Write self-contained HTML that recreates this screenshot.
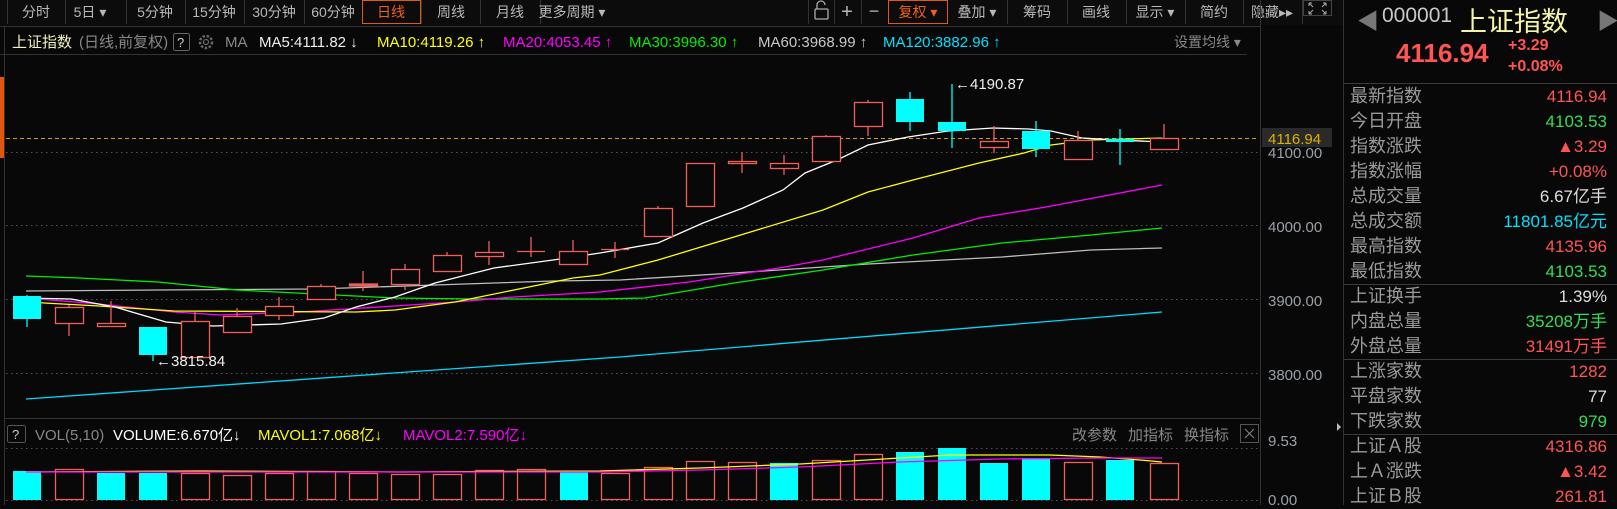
<!DOCTYPE html>
<html><head><meta charset="utf-8">
<style>
*{margin:0;padding:0;box-sizing:border-box}
body{width:1617px;height:505px;background:#080808;overflow:hidden;font-family:"Liberation Sans","Noto Sans CJK SC",sans-serif;position:relative}
svg text{font-family:"Liberation Sans","Noto Sans CJK SC",sans-serif}
#rp{position:absolute;left:1344px;top:0;width:273px;height:505px;background:#080808}
.row{position:absolute;left:6px;width:257px;height:25px;font-size:18px;color:#9a9a9a;line-height:25px}
.row span{position:absolute;right:0;top:0;font-size:17px}
.hl{position:absolute;left:0;width:273px;height:1px;background:#3a3a3a}
</style></head><body>
<svg width="1344" height="505" style="position:absolute;left:0;top:0">
<rect width="1344" height="505" fill="#080808"/>
<!-- toolbar -->
<rect x="0" y="0" width="1344" height="25" fill="#0c0c0c"/>
<line x1="0" y1="26.5" x2="1260" y2="26.5" stroke="#333"/>
<g stroke="#333">
<line x1="7.5" y1="0" x2="7.5" y2="24"/><line x1="65.5" y1="0" x2="65.5" y2="24"/><line x1="126.5" y1="0" x2="126.5" y2="24"/><line x1="185.5" y1="0" x2="185.5" y2="24"/><line x1="244.5" y1="0" x2="244.5" y2="24"/><line x1="304.5" y1="0" x2="304.5" y2="24"/><line x1="421.5" y1="0" x2="421.5" y2="24"/><line x1="480.5" y1="0" x2="480.5" y2="24"/><line x1="540.5" y1="0" x2="540.5" y2="24"/>
<line x1="808.5" y1="0" x2="808.5" y2="24"/><line x1="834.5" y1="0" x2="834.5" y2="24"/><line x1="861.5" y1="0" x2="861.5" y2="24"/><line x1="1007.5" y1="0" x2="1007.5" y2="24"/><line x1="1067.5" y1="0" x2="1067.5" y2="24"/><line x1="1126.5" y1="0" x2="1126.5" y2="24"/><line x1="1185.5" y1="0" x2="1185.5" y2="24"/><line x1="1243.5" y1="0" x2="1243.5" y2="24"/><line x1="1302.5" y1="0" x2="1302.5" y2="24"/>
</g>
<rect x="362.5" y="0.5" width="58" height="23" fill="none" stroke="#e05a10"/>
<rect x="888.5" y="0.5" width="59" height="23" fill="none" stroke="#e05a10"/>
<g font-size="14" fill="#b8b8b8" text-anchor="middle">
<text x="36" y="17">分时</text><text x="90" y="17">5日 ▾</text><text x="155" y="17">5分钟</text><text x="214" y="17">15分钟</text><text x="274" y="17">30分钟</text><text x="333" y="17">60分钟</text>
<text x="391" y="17" fill="#f06018">日线</text><text x="451" y="17">周线</text><text x="510" y="17">月线</text><text x="572" y="17">更多周期 ▾</text>
<text x="847" y="18" font-size="20">+</text><text x="874" y="17" font-size="18">−</text>
<text x="918" y="17" fill="#f06018">复权 ▾</text><text x="977" y="17">叠加 ▾</text><text x="1037" y="17">筹码</text><text x="1096" y="17">画线</text><text x="1155" y="17">显示 ▾</text><text x="1214" y="17">简约</text><text x="1272" y="17">隐藏▸▸</text>
</g>
<g stroke="#aaa" fill="none" stroke-width="1.3"><rect x="815" y="9" width="13" height="10" rx="1"/><path d="M817 9 V5 a4 4 0 0 1 8 0"/></g>
<rect x="1303.5" y="0.5" width="28" height="15" fill="none" stroke="#444"/>
<g stroke="#aaa" stroke-width="1"><path d="M1309 3 l4 4 M1309 3 h3 M1309 3 v3 M1326 3 l-4 4 M1326 3 h-3 M1326 3 v3 M1309 14 l4 -4 M1309 14 h3 M1309 14 v-3 M1326 14 l-4 -4 M1326 14 h-3 M1326 14 v-3"/></g>
<!-- info row -->
<line x1="0" y1="54.5" x2="1247" y2="54.5" stroke="#333"/>
<g font-size="15">
<text x="12" y="47" fill="#f0f0c0">上证指数</text>
<text x="79" y="47" fill="#888">(日线,前复权)</text>
<rect x="173.5" y="33.5" width="16" height="17" rx="2" fill="none" stroke="#666"/><text x="177" y="47" fill="#ccc" font-size="13">?</text>
<circle cx="206" cy="42" r="6" fill="none" stroke="#666" stroke-width="2.5" stroke-dasharray="2.5 1.6"/><circle cx="206" cy="42" r="2.5" fill="none" stroke="#666" stroke-width="1.3"/>
<text x="225" y="47" fill="#888">MA</text>
<text x="259" y="47" fill="#eee">MA5:4111.82 ↓</text>
<text x="377" y="47" fill="#ffff00">MA10:4119.26 ↑</text>
<text x="503" y="47" fill="#ff00ff">MA20:4053.45 ↑</text>
<text x="629" y="47" fill="#00ee00">MA30:3996.30 ↑</text>
<text x="758" y="47" fill="#c8c8c8">MA60:3968.99 ↑</text>
<text x="883" y="47" fill="#00e0ff">MA120:3882.96 ↑</text>
<text x="1174" y="47" fill="#888" font-size="14">设置均线 ▾</text>
</g>
<!-- left edge -->
<line x1="4.5" y1="27" x2="4.5" y2="505" stroke="#333"/>
<rect x="0" y="77" width="4" height="81" fill="#e0560e"/>
<!-- axis -->
<line x1="1260.5" y1="0" x2="1260.5" y2="505" stroke="#333"/>
<g stroke="#555" stroke-dasharray="1.5 3.5">
<line x1="6" y1="152.5" x2="1258" y2="152.5"/><line x1="6" y1="225.5" x2="1258" y2="225.5"/><line x1="6" y1="299.5" x2="1258" y2="299.5"/><line x1="6" y1="373.5" x2="1258" y2="373.5"/>
<line x1="6" y1="448.5" x2="1258" y2="448.5"/><line x1="6" y1="500.5" x2="1258" y2="500.5"/>
</g>
<line x1="6" y1="138.5" x2="1258" y2="138.5" stroke="#d4a000" stroke-dasharray="4 3"/>
<rect x="1262" y="128" width="70" height="19" fill="#2a2a2a"/>
<g font-size="15" fill="#9aa0a8">
<text x="1268" y="144" fill="#e0b000">4116.94</text>
<text x="1268" y="158">4100.00</text><text x="1268" y="232">4000.00</text><text x="1268" y="306">3900.00</text><text x="1268" y="380">3800.00</text>
<text x="1268" y="446">9.53</text><text x="1268" y="505">0.00</text>
</g>
<!-- MA lines -->
<g fill="none" stroke-width="1.3">
<polyline stroke="#00d8ff" points="26,399 620,357 1162,312"/>
<polyline stroke="#bdbdbd" points="26,291 158,290 316,289 435,285 553,281 620,280 734,273 868,264 1002,257 1091,250 1162,248"/>
<polyline stroke="#00ee00" points="26,276 79,278 158,282 237,290 316,294 395,298 474,299 600,299 645,298 734,283 823,270 913,255 1002,243 1091,235 1162,228"/>
<polyline stroke="#ff00ff" points="26,298 99,304 174,312 221,315 300,312 395,306 455,302 514,297 600,292 689,282 779,268 823,260 913,238 979,218 1046,207 1162,185"/>
<polyline stroke="#ffff00" points="26,302 99,306 174,311 356,312 395,310 455,302 514,290 573,278 600,275 658,260 734,237 823,210 868,192 913,180 979,163 1024,153 1051,145 1091,140 1162,138"/>
<polyline stroke="#ffffff" points="26,298 71,299 115,307 166,322 213,326 281,324 324,318 356,307 395,297 435,283 494,268 553,260 600,253 658,243 703,223 743,208 783,190 805,173 837,160 868,145 908,137 948,131 993,128 1029,129 1051,131 1082,138 1118,140 1162,142"/>
</g>
<!-- candles -->
<g stroke="#f0605a" fill="none" stroke-width="1.3">
<line x1="69" y1="305" x2="69" y2="336"/><rect x="55.5" y="307.5" width="28" height="16" fill="#080808"/>
<line x1="111" y1="301" x2="111" y2="326"/><rect x="97.5" y="323.5" width="28" height="3" fill="#080808"/>
<line x1="195" y1="312" x2="195" y2="321"/><rect x="181.5" y="321.5" width="28" height="36" fill="#080808"/>
<line x1="237" y1="308" x2="237" y2="316"/><rect x="223.5" y="316.5" width="28" height="16" fill="#080808"/>
<line x1="279" y1="297" x2="279" y2="320"/><rect x="265.5" y="306.5" width="28" height="9" fill="#080808"/>
<line x1="321" y1="284" x2="321" y2="286"/><rect x="307.5" y="286.5" width="28" height="13" fill="#080808"/>
<line x1="363" y1="271" x2="363" y2="291"/><rect x="349.5" y="284" width="28" height="2" fill="#f0605a"/>
<line x1="405" y1="264" x2="405" y2="290"/><rect x="391.5" y="269.5" width="28" height="15" fill="#080808"/>
<line x1="447" y1="252" x2="447" y2="255"/><rect x="433.5" y="255.5" width="28" height="16" fill="#080808"/>
<line x1="489" y1="241" x2="489" y2="265"/><rect x="475.5" y="252.5" width="28" height="4" fill="#080808"/>
<line x1="531" y1="237" x2="531" y2="257"/><line x1="517" y1="251.5" x2="545" y2="251.5"/>
<line x1="573" y1="240" x2="573" y2="251"/><rect x="559.5" y="251.5" width="28" height="13" fill="#080808"/>
<line x1="615" y1="242" x2="615" y2="258"/><line x1="601" y1="249.5" x2="629" y2="249.5"/>
<line x1="658" y1="206" x2="658" y2="208"/><rect x="644.5" y="208.5" width="28" height="28" fill="#080808"/>
<rect x="686.5" y="163.5" width="28" height="43" fill="#080808"/>
<line x1="742" y1="152" x2="742" y2="173"/><rect x="728.5" y="161.5" width="28" height="2" fill="#080808"/>
<line x1="784" y1="155" x2="784" y2="175"/><rect x="770.5" y="163.5" width="28" height="5" fill="#080808"/>
<line x1="826" y1="135" x2="826" y2="136"/><rect x="812.5" y="136.5" width="28" height="25" fill="#080808"/>
<line x1="868" y1="100" x2="868" y2="136"/><rect x="854.5" y="102.5" width="28" height="24" fill="#080808"/>
<line x1="994" y1="126" x2="994" y2="153"/><rect x="980.5" y="141.5" width="28" height="6" fill="#080808"/>
<line x1="1078" y1="131" x2="1078" y2="159"/><rect x="1064.5" y="140.5" width="28" height="19" fill="#080808"/>
<line x1="1164" y1="124" x2="1164" y2="138"/><rect x="1150.5" y="138.5" width="28" height="11" fill="#080808"/>
</g>
<g fill="#00ffff" stroke="#00ffff" stroke-width="1.3">
<line x1="27" y1="295" x2="27" y2="327"/><rect x="13" y="296" width="28" height="23" stroke="none"/>
<line x1="153" y1="327" x2="153" y2="361"/><rect x="139" y="327" width="28" height="28" stroke="none"/>
<line x1="910" y1="92" x2="910" y2="131"/><rect x="896" y="99" width="28" height="23" stroke="none"/>
<line x1="952" y1="84" x2="952" y2="148"/><rect x="938" y="122" width="28" height="9" stroke="none"/>
<line x1="1036" y1="121" x2="1036" y2="157"/><rect x="1022" y="131" width="28" height="18" stroke="none"/>
<line x1="1120" y1="129" x2="1120" y2="165"/><rect x="1106" y="139" width="28" height="3" stroke="none"/>
</g>
<g font-size="15" fill="#eee">
<text x="156" y="366">←3815.84</text>
<text x="955" y="89">←4190.87</text>
</g>
<!-- volume -->
<line x1="5" y1="418.5" x2="1260" y2="418.5" stroke="#333"/>
<rect x="7.5" y="425.5" width="18" height="17" rx="2" fill="none" stroke="#555"/><text x="12" y="439" font-size="13" fill="#ccc">?</text>
<g font-size="15">
<text x="35" y="440" fill="#888">VOL(5,10)</text>
<text x="113" y="440" fill="#fff">VOLUME:6.670亿↓</text>
<text x="258" y="440" fill="#ffff00">MAVOL1:7.068亿↓</text>
<text x="403" y="440" fill="#ff00ff">MAVOL2:7.590亿↓</text>
<text x="1072" y="440" fill="#888">改参数</text><text x="1128" y="440" fill="#888">加指标</text><text x="1184" y="440" fill="#888">换指标</text>
</g>
<rect x="1240.5" y="424.5" width="18" height="18" fill="none" stroke="#555"/><path d="M1245 429 l9 9 M1254 429 l-9 9" stroke="#888"/>
<g fill="#00ffff">
<rect x="13" y="471" width="28" height="29"/><rect x="97" y="473" width="28" height="27"/><rect x="139" y="473" width="28" height="27"/><rect x="560" y="471" width="28" height="29"/>
<rect x="770" y="463" width="28" height="37"/><rect x="896" y="452" width="28" height="48"/><rect x="938" y="448" width="28" height="52"/><rect x="980" y="463" width="28" height="37"/><rect x="1022" y="458" width="28" height="42"/><rect x="1106" y="460" width="28" height="40"/>
</g>
<g fill="none" stroke="#f0605a" stroke-width="1.3">
<rect x="55.5" y="469.5" width="28" height="30"/><rect x="181.5" y="473.5" width="28" height="26"/><rect x="223.5" y="475.5" width="28" height="24"/><rect x="265.5" y="473.5" width="28" height="26"/><rect x="307.5" y="471.5" width="28" height="28"/><rect x="349.5" y="473.5" width="28" height="26"/><rect x="391.5" y="474.5" width="28" height="25"/><rect x="433.5" y="474.5" width="28" height="25"/><rect x="475.5" y="470.5" width="28" height="29"/><rect x="517.5" y="469.5" width="28" height="30"/><rect x="601.5" y="473.5" width="28" height="26"/><rect x="644.5" y="467.5" width="28" height="32"/><rect x="686.5" y="461.5" width="28" height="38"/><rect x="728.5" y="462.5" width="28" height="37"/><rect x="812.5" y="460.5" width="28" height="39"/><rect x="854.5" y="454.5" width="28" height="45"/><rect x="1064.5" y="462.5" width="28" height="37"/><rect x="1150.5" y="463.5" width="28" height="36"/>
</g>
<g fill="none" stroke-width="1.3">
<polyline stroke="#ffff00" points="26,472 200,471 400,472 600,471 700,468 800,464 900,458 950,455 1050,455 1100,457 1140,460 1162,462"/>
<polyline stroke="#ff00ff" points="26,472 300,472 600,472 700,470 800,467 900,462 1000,459 1100,458 1162,458"/>
</g>
<!-- panel separator -->
<line x1="1343.5" y1="0" x2="1343.5" y2="505" stroke="#333"/>
<path d="M1337 423 l4 4 l-4 4z" fill="#bbb"/>
</svg>
<div id="rp">
<div style="position:absolute;left:13px;top:4px;font-size:22px;color:#777">◀</div>
<div style="position:absolute;left:38px;top:4px;font-size:21px;color:#c8c8c8">000001</div>
<div style="position:absolute;left:116px;top:0;font-size:27px;color:#f5f5a8">上证指数</div>
<div style="position:absolute;left:253px;top:4px;font-size:22px;color:#777">▶</div>
<div style="position:absolute;left:52px;top:38px;font-size:26px;font-weight:bold;color:#ff5555">4116.94</div>
<div style="position:absolute;left:164px;top:37px;font-size:16px;font-weight:bold;color:#ff5555">+3.29</div>
<div style="position:absolute;left:164px;top:58px;font-size:16px;font-weight:bold;color:#ff5555">+0.08%</div>
<div class="hl" style="top:83px"></div>
<div class="row" style="top:84px">最新指数<span style="color:#ff5555">4116.94</span></div>
<div class="row" style="top:109px">今日开盘<span style="color:#33dd55">4103.53</span></div>
<div class="row" style="top:134px">指数涨跌<span style="color:#ff5555">▲3.29</span></div>
<div class="row" style="top:159px">指数涨幅<span style="color:#ff5555">+0.08%</span></div>
<div class="row" style="top:184px">总成交量<span style="color:#ddd">6.67亿手</span></div>
<div class="row" style="top:209px">总成交额<span style="color:#00e0ff">11801.85亿元</span></div>
<div class="row" style="top:234px">最高指数<span style="color:#ff5555">4135.96</span></div>
<div class="row" style="top:259px">最低指数<span style="color:#33dd55">4103.53</span></div>
<div class="hl" style="top:284px"></div>
<div class="row" style="top:284px">上证换手<span style="color:#ddd">1.39%</span></div>
<div class="row" style="top:309px">内盘总量<span style="color:#33dd55">35208万手</span></div>
<div class="row" style="top:334px">外盘总量<span style="color:#ff5555">31491万手</span></div>
<div class="hl" style="top:359px"></div>
<div class="row" style="top:359px">上涨家数<span style="color:#ff5555">1282</span></div>
<div class="row" style="top:384px">平盘家数<span style="color:#ddd">77</span></div>
<div class="row" style="top:409px">下跌家数<span style="color:#33dd55">979</span></div>
<div class="hl" style="top:434px"></div>
<div class="row" style="top:434px">上证Ａ股<span style="color:#ff5555">4316.86</span></div>
<div class="row" style="top:459px">上Ａ涨跌<span style="color:#ff5555">▲3.42</span></div>
<div class="row" style="top:484px">上证Ｂ股<span style="color:#ff5555">261.81</span></div>
</div>
</body></html>
